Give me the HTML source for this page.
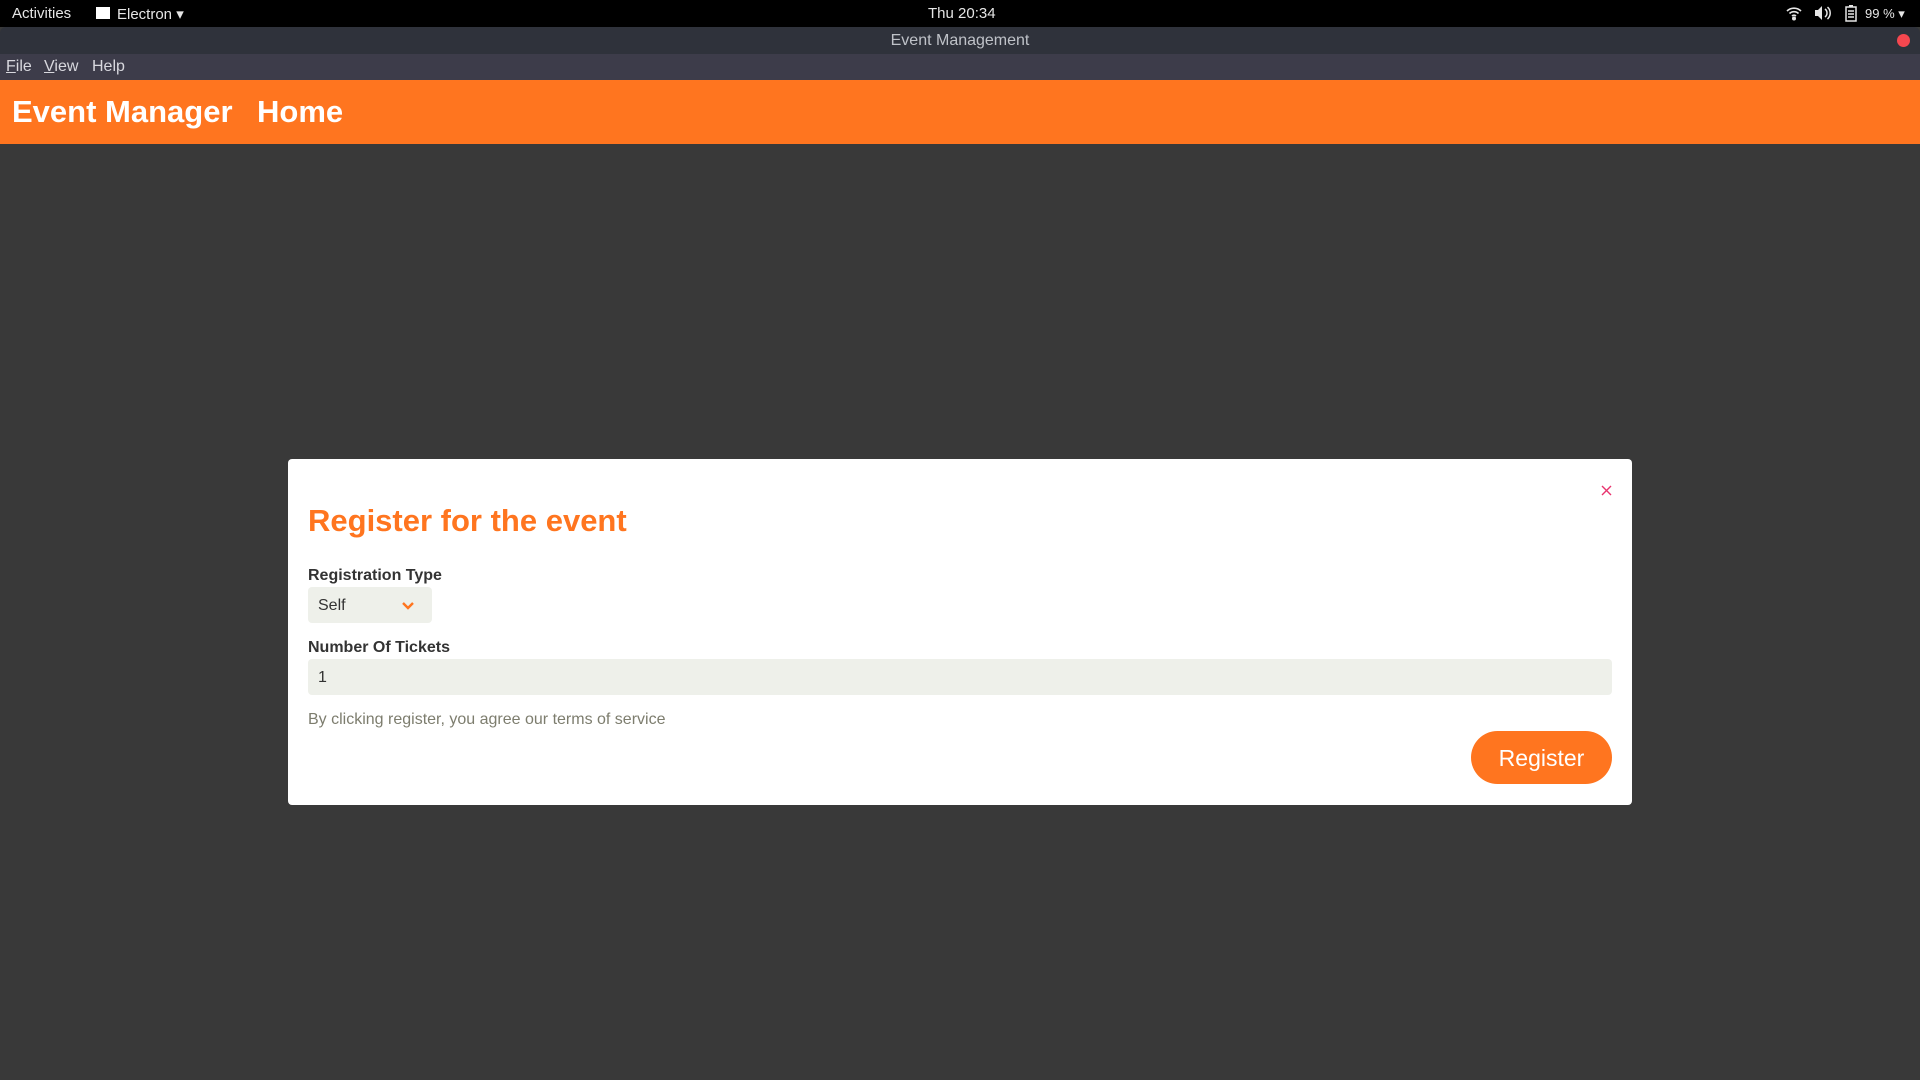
<!DOCTYPE html>
<html><head><meta charset="utf-8"><style>
*{margin:0;padding:0;box-sizing:border-box}
body{width:1920px;height:1080px;background:#393939;font-family:"Liberation Sans",sans-serif;position:relative;overflow:hidden}
.abs{position:absolute}
#top{left:0;top:0;width:1920px;height:27px;background:#000;color:#e6e6e6;font-size:15px}
#title{left:0;top:27px;width:1920px;height:27px;background:#2f323b;border-radius:6px 6px 0 0;color:#bfc2c8;font-size:16px;text-align:center;line-height:27px}
#menu{left:0;top:54px;width:1920px;height:26px;background:#3d3c4a;color:#d8d8de;font-size:16px}
#hdr{left:0;top:80px;width:1920px;height:64px;background:#ff751f;color:#fff;font-size:31px;font-weight:bold}
#dlg{left:288px;top:459px;width:1344px;height:346px;background:#fff;border-radius:4px}
.lbl{font-size:16px;font-weight:bold;color:#333}
.fld{background:#eef0ea;border-radius:4px}
</style></head><body>
<div id="top" class="abs">
 <span class="abs" style="left:12px;top:5px">Activities</span>
 <span class="abs" style="left:96px;top:7px;width:14px;height:12px;background:#fff"></span>
 <span class="abs" style="left:117px;top:5px">Electron ▾</span>
 <span class="abs" style="left:928px;top:5px">Thu 20:34</span>
 <svg class="abs" style="left:1786px;top:5px" width="16" height="16" viewBox="0 0 16 16" fill="none" stroke="#e6e6e6" stroke-width="1.6"><path d="M1 6a10 10 0 0 1 14 0M3.5 8.5a6.5 6.5 0 0 1 9 0M6 11a3 3 0 0 1 4 0"/><circle cx="8" cy="13.5" r="1.2" fill="#e6e6e6"/></svg>
 <svg class="abs" style="left:1814px;top:5px" width="18" height="16" viewBox="0 0 18 16"><path d="M1 5h3l4-4v14l-4-4H1z" fill="#e6e6e6"/><path d="M11 4a5 5 0 0 1 0 8M13.5 2a8 8 0 0 1 0 12" stroke="#e6e6e6" stroke-width="1.5" fill="none"/></svg>
 <svg class="abs" style="left:1845px;top:4px" width="12" height="18" viewBox="0 0 12 18"><rect x="1" y="3" width="10" height="14" fill="none" stroke="#e6e6e6" stroke-width="1.5"/><rect x="4" y="1" width="4" height="2" fill="#e6e6e6"/><path d="M3 7h6M3 10h6M3 13h6" stroke="#e6e6e6" stroke-width="1.4"/></svg>
 <span class="abs" style="left:1865px;top:6px;font-size:13px">99 % ▾</span>
</div>
<div id="title" class="abs">Event Management<span class="abs" style="right:10px;top:7px;width:13px;height:13px;border-radius:50%;background:#f5474f"></span></div>
<div id="menu" class="abs">
 <span class="abs" style="left:6px;top:4px"><u>F</u>ile</span>
 <span class="abs" style="left:44px;top:4px"><u>V</u>iew</span>
 <span class="abs" style="left:92px;top:4px">Help</span>
</div>
<div id="hdr" class="abs">
 <span class="abs" style="left:12px;top:14px">Event Manager</span>
 <span class="abs" style="left:257px;top:14px">Home</span>
</div>
<div id="dlg" class="abs">
 <svg class="abs" style="left:1313px;top:26px" width="11" height="11" viewBox="0 0 11 11"><path d="M1 1l9 9M10 1l-9 9" stroke="#e8336e" stroke-width="1.4"/></svg>
 <div class="abs" style="left:20px;top:44px;font-size:31px;font-weight:bold;color:#ff751f">Register for the event</div>
 <div class="abs lbl" style="left:20px;top:108px">Registration Type</div>
 <div class="abs fld" style="left:20px;top:128px;width:124px;height:36px">
  <span class="abs" style="left:10px;top:10px;font-size:16px;color:#333">Self</span>
  <svg class="abs" style="left:93px;top:14px" width="14" height="9" viewBox="0 0 14 9"><path d="M2 2l5 5 5-5" stroke="#ff751f" stroke-width="2.4" fill="none"/></svg>
 </div>
 <div class="abs lbl" style="left:20px;top:180px">Number Of Tickets</div>
 <div class="abs fld" style="left:20px;top:200px;width:1304px;height:36px">
  <span class="abs" style="left:10px;top:10px;font-size:16px;color:#333">1</span>
 </div>
 <div class="abs" style="left:20px;top:252px;font-size:16px;color:#7d7d6e">By clicking register, you agree our terms of service</div>
 <div class="abs" style="left:1183px;top:272px;width:141px;height:53px;border-radius:27px;background:#ff751f;color:#fff;font-size:23px;text-align:center;line-height:54px">Register</div>
</div>
</body></html>
